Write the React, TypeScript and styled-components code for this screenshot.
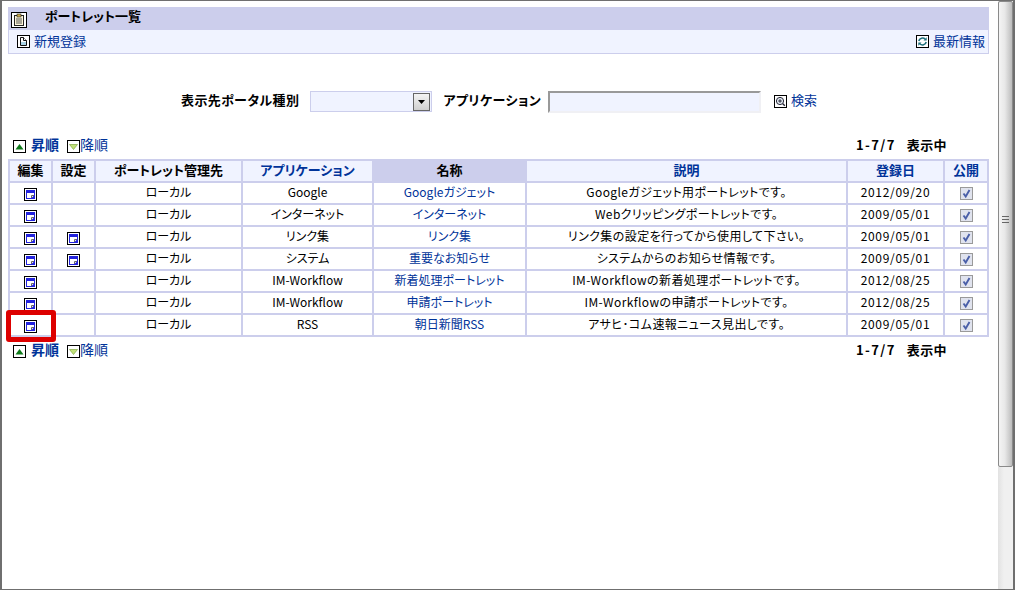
import styled, { createGlobalStyle } from "styled-components";

const GlobalStyle = createGlobalStyle`
  html, body { margin: 0; padding: 0; height: 100%; background: #fff; overflow: hidden; }
  #root { height: 100%; }
`;

const FONT = `"MS PGothic", "Noto Sans CJK JP", "Liberation Sans", sans-serif`;

interface Row {
  setting: boolean;
  app: string;
  name: string;
  desc: string;
  date: string;
}

const rows: Row[] = [
  { setting: false, app: "Google", name: "Googleガジェット", desc: "Googleガジェット用ポートレットです。", date: "2012/09/20" },
  { setting: false, app: "インターネット", name: "インターネット", desc: "Webクリッピングポートレットです。", date: "2009/05/01" },
  { setting: true, app: "リンク集", name: "リンク集", desc: "リンク集の設定を行ってから使用して下さい。", date: "2009/05/01" },
  { setting: true, app: "システム", name: "重要なお知らせ", desc: "システムからのお知らせ情報です。", date: "2009/05/01" },
  { setting: false, app: "IM-Workflow", name: "新着処理ポートレット", desc: "IM-Workflowの新着処理ポートレットです。", date: "2012/08/25" },
  { setting: false, app: "IM-Workflow", name: "申請ポートレット", desc: "IM-Workflowの申請ポートレットです。", date: "2012/08/25" },
  { setting: false, app: "RSS", name: "朝日新聞RSS", desc: "アサヒ･コム速報ニュース見出しです。", date: "2009/05/01" },
];

export default function App() {
  return (
    <Frame>
      <GlobalStyle />
      <Page>
        <TitleBar>
          <TitleIcon />
          <Title>ポートレット一覧</Title>
        </TitleBar>
        <ToolBar>
          <ToolLink>
            <NewIcon />
            <Lifted>新規登録</Lifted>
          </ToolLink>
          <ToolLink>
            <RefreshIcon />
            <Lifted>最新情報</Lifted>
          </ToolLink>
        </ToolBar>

        <SearchRow>
          <FieldLabel>表示先ポータル種別</FieldLabel>
          <SelectBox>
            <SelectArrow>
              <svg width="7" height="4" viewBox="0 0 7 4">
                <path d="M0 0h7L3.5 4z" fill="#000" />
              </svg>
            </SelectArrow>
          </SelectBox>
          <FieldLabel>アプリケーション</FieldLabel>
          <SearchInput />
          <SearchLink>
            <SearchIcon />
            <Lifted $by={5}>検索</Lifted>
          </SearchLink>
        </SearchRow>

        <SortBar />

        <ListTable>
          <colgroup>
            <col style={{ width: 41 }} />
            <col style={{ width: 41 }} />
            <col style={{ width: 145 }} />
            <col style={{ width: 129 }} />
            <col style={{ width: 151 }} />
            <col style={{ width: 319 }} />
            <col style={{ width: 95 }} />
            <col style={{ width: 42 }} />
          </colgroup>
          <thead>
            <tr>
              <HeadCell>編集</HeadCell>
              <HeadCell>設定</HeadCell>
              <HeadCell>ポートレット管理先</HeadCell>
              <HeadCell $link>アプリケーション</HeadCell>
              <HeadCell $active>名称</HeadCell>
              <HeadCell $link>説明</HeadCell>
              <HeadCell $link>登録日</HeadCell>
              <HeadCell $link>公開</HeadCell>
            </tr>
          </thead>
          <tbody>
            {rows.map((row, i) => (
              <tr key={i}>
                <IconCell $top={3}>
                  <EditIcon />
                </IconCell>
                <IconCell $top={3}>{row.setting && <EditIcon />}</IconCell>
                <Cell>ローカル</Cell>
                <Cell>{row.app}</Cell>
                <Cell>
                  <NameLink>{row.name}</NameLink>
                </Cell>
                <DescCell>{row.desc}</DescCell>
                <DateCell>{row.date}</DateCell>
                <IconCell $top={1}>
                  <CheckIcon />
                </IconCell>
              </tr>
            ))}
          </tbody>
        </ListTable>

        <SortBar $bottom />

        <Highlight />
      </Page>
      <ScrollBar>
        <ScrollThumb>
          <Grip />
        </ScrollThumb>
      </ScrollBar>
    </Frame>
  );
}

function SortBar({ $bottom }: { $bottom?: boolean }) {
  return (
    <SortRow $bottom={$bottom}>
      <SortLink $strong>
        <AscIcon />
        <Lifted $by={4}>昇順</Lifted>
      </SortLink>
      <SortLink>
        <DescIcon />
        <Lifted $by={4}>降順</Lifted>
      </SortLink>
      <Count>
        <CountRange>1-7/7</CountRange>
        <span>表示中</span>
      </Count>
    </SortRow>
  );
}

function IconBox({ size = 13, children }: { size?: number; children: React.ReactNode }) {
  return (
    <svg width={size} height={size} viewBox={`0 0 ${size} ${size}`} style={{ flex: "none", display: "block" }}>
      <rect x="0.5" y="0.5" width={size - 1} height={size - 1} fill="#fff" stroke="#000" />
      {children}
    </svg>
  );
}

function TitleIcon() {
  return (
    <TitleIconWrap>
      <IconBox size={16}>
        <rect x="3.5" y="3.5" width="9" height="10" fill="#fdf5d8" stroke="#222" />
        <rect x="6" y="2" width="4" height="3" fill="#caa84a" stroke="#222" strokeWidth="0.6" />
        <path d="M5 7h6M5 9h6M5 11h6" stroke="#555" />
      </IconBox>
    </TitleIconWrap>
  );
}

function NewIcon() {
  return (
    <IconBox>
      <path d="M3.5 2.5h3l3 3v5h-6z" fill="#fff" stroke="#111" />
      <path d="M4 7h5v3H4z" fill="#a9d3e6" />
      <path d="M6.5 2.5v3h3" fill="#fff" stroke="#111" />
    </IconBox>
  );
}

function RefreshIcon() {
  return (
    <IconBox>
      <path d="M2.8 6a3.8 3.8 0 0 1 6.4-1.8M10.2 7a3.8 3.8 0 0 1-6.4 1.8" fill="none" stroke="#1f6f7d" strokeWidth="1.6" />
      <path d="M7.5 5.5h3.2V2.3zM5.5 7.5H2.3v3.2z" fill="#1f6f7d" />
    </IconBox>
  );
}

function SearchIcon() {
  return (
    <IconBox>
      <circle cx="6" cy="6" r="3.6" fill="#e6eef6" stroke="#223" />
      <path d="M4.2 6h3.6M6 4.2v3.6" stroke="#223" />
      <path d="M8.8 8.8l2 2" stroke="#223" strokeWidth="1.4" />
    </IconBox>
  );
}

function AscIcon() {
  return (
    <IconBox>
      <path d="M2.5 9.5L6.5 4l4 5.5z" fill="#0e7a1a" />
    </IconBox>
  );
}

function DescIcon() {
  return (
    <IconBox>
      <path d="M2.5 4.5h8l-4 5z" fill="#c2e27a" stroke="#6f9a2c" strokeWidth="0.6" />
    </IconBox>
  );
}

function EditIcon() {
  return (
    <EditWrap>
      <IconBox>
        <rect x="2" y="2" width="9" height="9" fill="#2222dd" />
        <path d="M3 5h7v2.5L7.5 10H3z" fill="#fff" />
        <path d="M7.5 10V7.5H10" fill="none" stroke="#666" />
      </IconBox>
    </EditWrap>
  );
}

function CheckIcon() {
  return (
    <CheckWrap>
      <svg width="13" height="13" viewBox="0 0 13 13" style={{ display: "block" }}>
        <rect x="0.5" y="0.5" width="12" height="12" fill="#e0e3ee" stroke="#9a9a9a" />
        <path d="M3.5 6.5l2.2 3L9.5 3" fill="none" stroke="#4a5fa8" strokeWidth="1.9" />
      </svg>
    </CheckWrap>
  );
}

const Frame = styled.div`
  box-sizing: border-box;
  display: flex;
  width: 1015px;
  height: 590px;
  border: solid #6f6f6f;
  border-width: 1px 2px 1px 2px;
  background: #fff;
  font-family: ${FONT};
  font-feature-settings: "palt";
  font-size: 12px;
  color: #000;
  overflow: hidden;
`;

const Page = styled.div`
  position: relative;
  flex: 1;
  min-width: 0;
  padding: 6px 9px 0 6px;
`;

const TitleBar = styled.div`
  display: flex;
  align-items: center;
  height: 23px;
  background: #ccceec;
`;

const TitleIconWrap = styled.span`
  margin: 3px 0 0 3px;
`;

const Title = styled.span`
  margin: 0 0 6px 18px;
  font-weight: bold;
  font-size: 13px;
`;

const ToolBar = styled.div`
  box-sizing: border-box;
  display: flex;
  justify-content: space-between;
  align-items: center;
  height: 24px;
  padding: 0 3px 0 8px;
  background: #f0f3ff;
  border: 1px solid #ccceec;
  border-top: none;
`;

const Lifted = styled.span<{ $by?: number }>`
  display: block;
  margin-bottom: ${(props) => props.$by ?? 2}px;
`;

const ToolLink = styled.a`
  display: flex;
  align-items: center;
  gap: 4px;
  color: #003399;
  font-size: 13px;
  font-feature-settings: normal;
`;

const SearchRow = styled.div`
  display: flex;
  align-items: center;
  height: 21px;
  margin-top: 37px;
  padding-left: 173px;
`;

const FieldLabel = styled.span`
  margin-bottom: 5px;
  font-weight: bold;
  font-size: 13px;
  letter-spacing: 0.4px;
  white-space: nowrap;
`;

const SelectBox = styled.div`
  box-sizing: border-box;
  display: flex;
  justify-content: flex-end;
  align-items: center;
  width: 122px;
  height: 21px;
  margin: 0 11px;
  padding-right: 1px;
  background: #f0f3ff;
  border: 1px solid #ccceec;
`;

const SelectArrow = styled.span`
  box-sizing: border-box;
  display: flex;
  justify-content: center;
  align-items: center;
  width: 17px;
  height: 18px;
  background: linear-gradient(#f4f4f4, #cfcfcf);
  border: 1px solid #666;
`;

const SearchInput = styled.div`
  box-sizing: border-box;
  width: 213px;
  height: 22px;
  margin: 0 13px 0 7px;
  background: #f0f3ff;
  border: 2px solid #f0f0f4;
  border-top-color: #999;
  border-left-color: #999;
`;

const SearchLink = styled.a`
  display: flex;
  align-items: center;
  gap: 4px;
  color: #003399;
  font-size: 13px;
  font-feature-settings: normal;
`;

const SortRow = styled.div<{ $bottom?: boolean }>`
  display: flex;
  align-items: center;
  height: 16px;
  margin: ${(props) => (props.$bottom ? "6px 0 0" : "26px 0 5px")};
  padding: 0 42px 0 5px;
`;

const SortLink = styled.a<{ $strong?: boolean }>`
  display: flex;
  align-items: center;
  gap: ${(props) => (props.$strong ? "5px" : "0")};
  width: 54px;
  color: #003399;
  font-size: 14px;
  font-weight: ${(props) => (props.$strong ? "bold" : "normal")};
  font-feature-settings: normal;
  white-space: nowrap;
`;

const Count = styled.span`
  display: flex;
  gap: 11px;
  margin: 0 0 3px auto;
  font-size: 13px;
  font-weight: bold;
  letter-spacing: 0.4px;
`;

const CountRange = styled.span`
  letter-spacing: 1.4px;
`;

const ListTable = styled.table`
  table-layout: fixed;
  width: 981px;
  border-spacing: 2px;
  background: #ccceec;
  font-size: 12px;
`;

const HeadCell = styled.th<{ $link?: boolean; $active?: boolean }>`
  box-sizing: border-box;
  height: 20px;
  padding: 0 0 2px;
  background: ${(props) => (props.$active ? "#ccceec" : "#f0f3ff")};
  color: ${(props) => (props.$link ? "#003399" : "#000")};
  font-size: 13px;
  line-height: 14px;
  font-weight: bold;
  text-align: center;
  white-space: nowrap;
`;

const Cell = styled.td`
  box-sizing: border-box;
  height: 20px;
  padding: 0 0 2px;
  background: #fff;
  line-height: 14px;
  text-align: center;
  white-space: nowrap;
  vertical-align: middle;
`;

const IconCell = styled(Cell)<{ $top: number }>`
  padding: ${(props) => props.$top}px 0 0;
`;

const DescCell = styled(Cell)`
  letter-spacing: 0.4px;
`;

const DateCell = styled(Cell)`
  letter-spacing: 0.7px;
`;

const NameLink = styled.a`
  color: #003399;
`;

const EditWrap = styled.span`
  display: flex;
  justify-content: center;
`;

const CheckWrap = styled.span`
  display: flex;
  justify-content: center;
`;

const Highlight = styled.div`
  position: absolute;
  left: 4px;
  top: 309px;
  width: 40px;
  height: 22px;
  border: 5px solid #dd0000;
  border-radius: 3px;
`;

const ScrollBar = styled.div`
  flex: none;
  width: 15px;
  background: linear-gradient(90deg, #e2e2e2, #f0f0f0 40%);
`;

const ScrollThumb = styled.div`
  box-sizing: border-box;
  display: flex;
  justify-content: center;
  align-items: center;
  height: 466px;
  padding-bottom: 28px;
  background: linear-gradient(90deg, #f4f4f4, #e8e8e8 45%, #bcbcbc);
  border: 1px solid #8a8a8a;
  border-radius: 2px;
`;

const Grip = styled.div`
  width: 7px;
  height: 9px;
  background: repeating-linear-gradient(#666 0 1px, transparent 1px 3px);
`;
